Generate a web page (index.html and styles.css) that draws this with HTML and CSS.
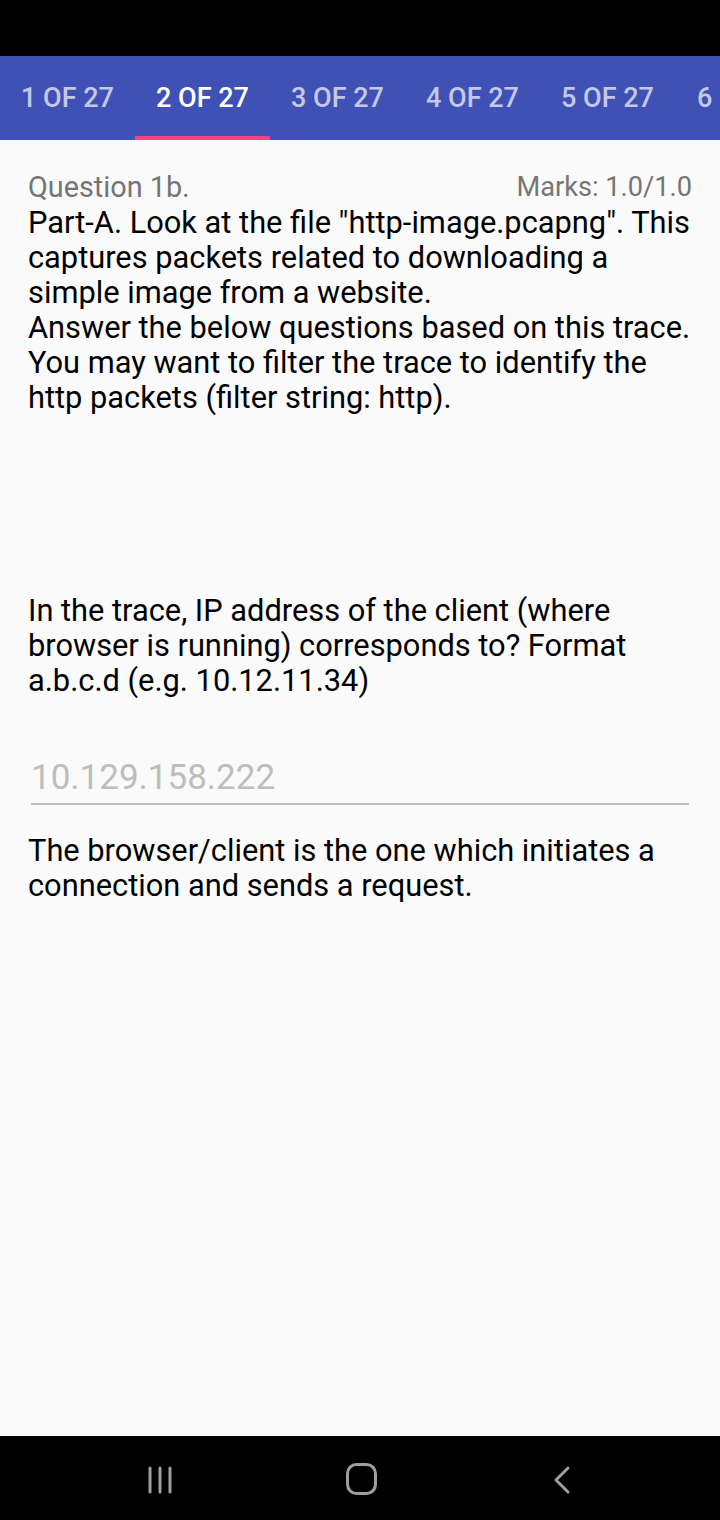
FILE: index.html
```html
<!DOCTYPE html>
<html>
<head>
<meta charset="utf-8">
<link rel="stylesheet" href="styles.css">
</head>
<body>
<div class="screen">
  <div class="status"></div>
  <div class="tabs">
    <div class="tab">1 OF 27</div>
    <div class="tab active">2 OF 27</div>
    <div class="tab">3 OF 27</div>
    <div class="tab">4 OF 27</div>
    <div class="tab">5 OF 27</div>
    <div class="tab">6 OF 27</div>
  </div>
  <main class="content">
    <div class="qhead">
      <span class="qtitle">Question 1b.</span>
      <span class="marks">Marks: 1.0/1.0</span>
    </div>
    <p class="text">Part-A. Look at the file "http-image.pcapng". This captures packets related to downloading a simple image from a website.<br>Answer the below questions based on this trace. You may want to filter the trace to identify the http packets (filter string: http).</p>
    <p class="text question">In the trace, IP address of the client (where browser is running) corresponds to? Format a.b.c.d (e.g. 10.12.11.34)</p>
    <div class="field"><span class="answer">10.129.158.222</span></div>
    <p class="text feedback">The browser/client is the one which initiates a connection and sends a request.</p>
  </main>
  <div class="navbar">
    <svg class="nav-icon" width="30" height="30" viewBox="0 0 30 30">
      <g stroke="#9e9e9e" stroke-width="3" stroke-linecap="round">
        <line x1="4" y1="3" x2="4" y2="27"/>
        <line x1="14" y1="3" x2="14" y2="27"/>
        <line x1="24" y1="3" x2="24" y2="27"/>
      </g>
    </svg>
    <svg class="nav-icon home" width="32" height="34" viewBox="0 0 32 34">
      <rect x="1.5" y="1.5" width="28" height="29" rx="9" fill="none" stroke="#9e9e9e" stroke-width="3"/>
    </svg>
    <svg class="nav-icon" width="22" height="30" viewBox="0 0 22 30">
      <polyline points="17,3 5,15 17,27" fill="none" stroke="#9e9e9e" stroke-width="3" stroke-linecap="round" stroke-linejoin="round"/>
    </svg>
  </div>
</div>
</body>
</html>
```

FILE: styles.css
```css
* { box-sizing: border-box; }
html, body {
  margin: 0;
  padding: 0;
  background: #fafafa;
  font-family: Roboto, "Liberation Sans", sans-serif;
}
.screen {
  width: 720px;
  height: 1520px;
  display: flex;
  flex-direction: column;
  overflow: hidden;
}
.status {
  height: 56px;
  background: #000;
  flex: none;
}
.tabs {
  height: 84px;
  background: #3f51b5;
  display: flex;
  flex: none;
  overflow: hidden;
}
.tab {
  flex: 0 0 135px;
  height: 84px;
  display: flex;
  align-items: center;
  justify-content: center;
  color: rgba(255,255,255,0.7);
  font-size: 27px;
  font-weight: 500;
  white-space: nowrap;
  border-bottom: 4px solid transparent;
  padding-top: 4px;
}
.tab:last-child {
  justify-content: flex-start;
  padding-left: 22px;
}
.tab.active {
  color: #fff;
  border-bottom-color: #ff4081;
}
.content {
  flex: 1;
  padding: 30px 28px 0 28px;
  background: #fafafa;
}
.qhead {
  display: flex;
  justify-content: space-between;
  align-items: center;
  height: 35px;
  color: #757575;
}
.qtitle {
  font-size: 28.8px;
  line-height: 35px;
}
.marks {
  font-size: 27.2px;
  line-height: 35px;
}
.text {
  margin: 0;
  font-size: 30.8px;
  line-height: 35px;
  color: #000;
}
.question {
  margin-top: 178px;
}
.field {
  margin: 48px 3px 0 3px;
  height: 59px;
  border-bottom: 2px solid #bdbdbd;
  display: flex;
  align-items: flex-end;
  padding-bottom: 5px;
}
.answer {
  font-size: 35px;
  line-height: 40px;
  color: #bdbdbd;
}
.feedback {
  margin-top: 28px;
}
.navbar {
  height: 84px;
  background: #000;
  flex: none;
  display: flex;
  align-items: center;
  justify-content: space-between;
  padding: 4px 147px 0 146px;
}
.home {
  margin-right: 4px;
}
```
